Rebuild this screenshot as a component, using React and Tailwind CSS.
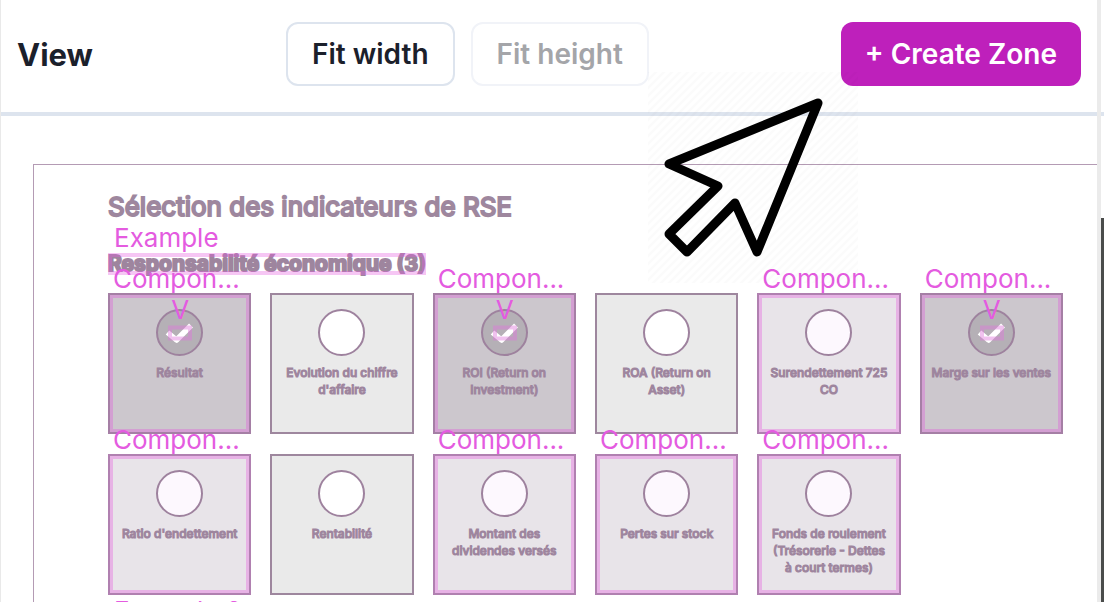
import React from "react";

const indicators = [
  { label: "Résultat", zone: true, checked: true },
  { label: "Evolution du chiffre d'affaire" },
  { label: "ROI (Return on Investment)", zone: true, checked: true },
  { label: "ROA (Return on Asset)" },
  { label: "Surendettement 725 CO", zone: true },
  { label: "Marge sur les ventes", zone: true, checked: true },
  { label: "Ratio d'endettement", zone: true },
  { label: "Rentabilité" },
  { label: "Montant des dividendes versés", zone: true },
  { label: "Pertes sur stock", zone: true },
  { label: "Fonds de roulement (Trésorerie - Dettes à court termes)", zone: true },
];

function cardColors({ zone, checked }) {
  if (checked) return "border-[#a57fa5] bg-[#ccc7cd] shadow-[inset_0_0_0_3px_#d39fd2]";
  if (zone) return "border-[#b080b0] bg-[#e8e4e9] shadow-[inset_0_0_0_3px_#e7b2e5]";
  return "border-[#9e879e] bg-[#eaeaea]";
}

function circleColors({ zone, checked }) {
  if (checked) return "bg-[#b5b0b6]";
  if (zone) return "bg-[#fdf8fe]";
  return "bg-white";
}

function ZoneTag({ children, className = "" }) {
  return (
    <span className={`pointer-events-none absolute z-10 whitespace-nowrap text-[26px] leading-8 font-normal text-[#e45be0] ${className}`}>
      {children}
    </span>
  );
}

function IndicatorCard({ item }) {
  return (
    <label className={`relative flex h-[141px] flex-col items-center border-2 px-[9px] pt-[14px] ${cardColors(item)}`}>
      {item.zone && <ZoneTag className="-top-8 left-[3px]">Compon...</ZoneTag>}
      <span className="relative flex">
        <input
          type="checkbox"
          defaultChecked={item.checked}
          className={`size-[47px] appearance-none rounded-full border-2 border-[#9e829e] ${circleColors(item)}`}
        />
        {item.checked && (
          <>
            <svg viewBox="0 0 47 47" className="pointer-events-none absolute inset-0 size-full" fill="none" aria-hidden="true">
              <path d="M11.5 23.5 20.5 31 35 16.5" stroke="#fff" strokeWidth="5.5" strokeLinejoin="round" />
              <rect x="14" y="18.5" width="20" height="11" stroke="#e077dc" strokeOpacity="0.45" strokeWidth="4" />
            </svg>
            <ZoneTag className="-top-[15px] left-[15px]">V</ZoneTag>
          </>
        )}
      </span>
      <span className="mt-2 text-center text-[12px] leading-[17px] font-medium text-[#9e859e] [-webkit-text-stroke:1px_#9e859e]">
        {item.label}
      </span>
    </label>
  );
}

function Cursor() {
  return (
    <svg
      viewBox="0 0 210 211"
      className="pointer-events-none absolute top-[72px] right-[239px] z-20 h-[211px] w-[210px]"
      fill="none"
      aria-hidden="true"
    >
      <defs>
        <pattern id="hatch" width="8" height="8" patternUnits="userSpaceOnUse">
          <path d="M-2 2 2-2M0 8 8 0M6 10 10 6" stroke="#000" strokeOpacity="0.015" strokeWidth="2" />
        </pattern>
      </defs>
      <rect width="210" height="211" fill="url(#hatch)" />
      <path d="M170 31 21 92 70 114 21 162 39 180 87 131 109 180Z" stroke="#000" strokeWidth="9" strokeLinejoin="round" />
    </svg>
  );
}

export default function App() {
  return (
    <div className="flex h-screen overflow-hidden bg-white font-['Inter',sans-serif]">
      <div className="relative min-w-0 flex-1 border-l border-[#e9e9e9]">
        <header className="flex h-29 items-center justify-between border-b-4 border-[#dde4ee] pr-4 pb-1 pl-4">
          <h1 className="w-[269px] pt-0.5 text-[31px] leading-10 font-bold text-[#1b202b]">View</h1>
          <div className="flex flex-1 gap-4">
            <button type="button" className="h-16 rounded-xl border-2 border-[#dde4ee] px-6 text-[28px] font-semibold text-[#1b202b]">
              Fit width
            </button>
            <button type="button" disabled className="h-16 rounded-xl border-2 border-[#f1f3f8] px-6 text-[28px] font-semibold text-[#a4a5a9]">
              Fit height
            </button>
          </div>
          <button type="button" className="h-16 rounded-xl bg-[#be20bb] px-6 text-[28px] font-semibold text-white">
            + Create Zone
          </button>
        </header>
        <Cursor />
        <main className="mt-12 ml-8 h-full border-t border-l border-[#b49bb4] pt-6 pr-[34px] pl-[74px]">
          <h2 className="text-[26px] leading-9 font-normal text-[#9e879e] [-webkit-text-stroke:2px_#9e879e]">
            Sélection des indicateurs de RSE
          </h2>
          <section className="relative pt-7">
            <ZoneTag className="-top-[3px] left-1.5">Example</ZoneTag>
            <h3 className="relative w-fit text-[21px] leading-[22px] font-bold text-[#9e859e] [-webkit-text-stroke:2px_#9e859e] after:absolute after:inset-0 after:border-4 after:border-[#e45be0]/35">
              Responsabilité économique (3)
            </h3>
            <div className="mt-[18px] grid grid-cols-6 gap-x-[19px] gap-y-5">
              {indicators.map((item) => (
                <IndicatorCard key={item.label} item={item} />
              ))}
            </div>
          </section>
          <section className="relative">
            <ZoneTag className="top-0 left-1.5">Example 2</ZoneTag>
          </section>
        </main>
      </div>
      <div className="w-1 shrink-0 bg-[#ebebeb]" />
      <div className="flex w-[3px] shrink-0 flex-col">
        <div className="h-28" />
        <div className="h-1 bg-[#dde4ee]" />
        <div className="h-[102px]" />
        <div className="flex-1 bg-[#4a4c4b]" />
      </div>
    </div>
  );
}
